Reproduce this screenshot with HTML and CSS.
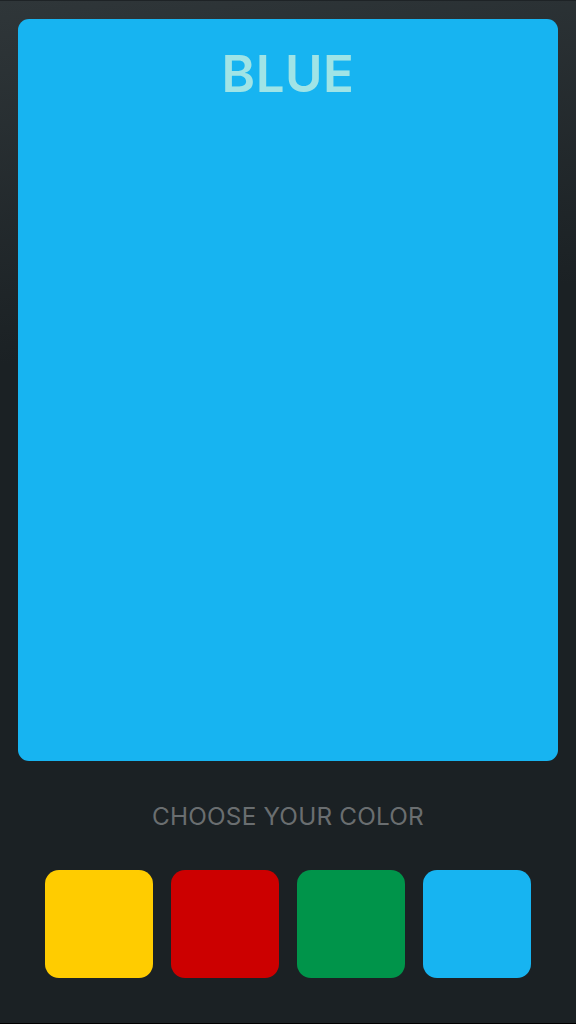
FILE: index.html
```html
<!DOCTYPE html>
<html>
<head>
<meta charset="utf-8">
<link rel="stylesheet" href="styles.css">
</head>
<body>
<div class="screen">
  <div class="card">
    <div class="title">BLUE</div>
  </div>
  <div class="prompt">CHOOSE YOUR COLOR</div>
  <div class="choices">
    <div class="swatch yellow"></div>
    <div class="swatch red"></div>
    <div class="swatch green"></div>
    <div class="swatch blue"></div>
  </div>
</div>
</body>
</html>
```
FILE: styles.css
```css
html, body {
  margin: 0;
  padding: 0;
  background: #1b2023;
}
.screen {
  width: 576px;
  height: 1024px;
  box-sizing: border-box;
  padding: 18px 18px 0 18px;
  background: linear-gradient(172deg, #2f3639 0%, #1b2124 33%, #1b2124 100%);
  border-top: 1px solid #1e2326;
  border-bottom: 1px solid #000;
  display: flex;
  flex-direction: column;
  font-family: Inter, "Noto Sans", sans-serif;
}
.card {
  height: 742px;
  background: #17b4f1;
  border-radius: 11px;
  display: flex;
  justify-content: center;
}
.title {
  margin-top: 24px;
  font-size: 51px;
  font-weight: 600;
  color: #a0e4e6;
  line-height: 62px;
  letter-spacing: 0.5px;
}
.prompt {
  margin-top: 40px;
  text-align: center;
  font-size: 24.3px;
  color: #6a6e70;
  line-height: 30px;
  letter-spacing: 0.2px;
}
.choices {
  margin-top: 39px;
  display: flex;
  justify-content: center;
  gap: 18px;
}
.swatch {
  width: 108px;
  height: 108px;
  border-radius: 14px;
}
.yellow { background: #ffcc00; }
.red { background: #cc0000; }
.green { background: #00944a; }
.blue { background: #17b4f1; }
```
